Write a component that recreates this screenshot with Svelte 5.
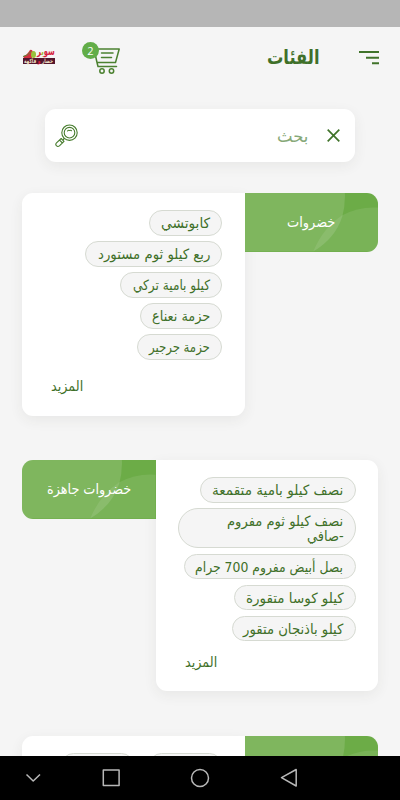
<script>
  const sections = [
    {
      title: 'خضروات', titleWidth: 48, side: 'right', height: 222.5, moreTop: 17, moreLeft: 29,
      items: [
        { w: 73.5, lines: [['كابوتشي', 49]] },
        { w: 137, lines: [['ربع كيلو ثوم مستورد', 112]] },
        { w: 102, lines: [['كيلو بامية تركي', 77]] },
        { w: 82, lines: [['حزمة نعناع', 58]] },
        { w: 85, lines: [['حزمة جرجير', 61]] }
      ]
    },
    {
      title: 'خضروات جاهزة', titleWidth: 84, side: 'left', height: 231, moreTop: 12, moreLeft: 29,
      items: [
        { w: 155.5, lines: [['نصف كيلو بامية متقمعة', 131]] },
        { w: 178, lines: [['نصف كيلو ثوم مفروم', 116], ['-صافي', 37]] },
        { w: 172, lines: [['بصل أبيض مفروم 700 جرام', 148]] },
        { w: 122, lines: [['كيلو كوسا متقورة', 98]] },
        { w: 124, lines: [['كيلو باذنجان متقور', 100]] }
      ]
    }
  ];

  function fit(node, width) {
    node.style.transform = `scaleX(${width / node.offsetWidth})`;
  }
</script>

{#snippet tag(title, width)}
  <div class="tag">
    <svg class="leaves" viewBox="0 0 133 58" preserveAspectRatio="none">
      <path d="M0 0H99.500Q100 12 97 23Q90 45 68 58H0Z" fill="#fff" opacity=".13" />
      <path d="M133 14.500Q114 13 97 22Q78 34 68 58H133Z" fill="#fff" opacity=".09" />
    </svg>
    {#if title}<span class="fit center" use:fit={width}>{title}</span>{/if}
  </div>
{/snippet}

<div class="screen" dir="rtl">
  <div class="status"></div>
  <header>
    <svg class="menu" width="20" height="14" viewBox="0 0 20 14" stroke="#40732a" stroke-width="2">
      <path d="M0 1H20M7 6.700H20M13 12.300H20" />
    </svg>
    <h1><span class="fit" use:fit={53}>الفئات</span></h1>
    <div class="cart">
      <svg width="40" height="34" viewBox="0 0 40 34" fill="none" stroke="#4b8130" stroke-width="1.500" stroke-linejoin="round" stroke-linecap="round">
        <path d="M12 7H37.200L33.500 20.500H15L12 7M15 20.500L16 24.500H34.500M19.500 11H31M19.500 15.500H29.500" />
        <circle cx="20" cy="29" r="2.200" /><circle cx="29.500" cy="29" r="2.200" />
      </svg>
      <b>2</b>
    </div>
    <div class="logo">
      <div class="logo-top">
        <span class="fit" use:fit={18}><i>سو</i><em>ب</em><i>ر</i></span>
        <svg width="13" height="9" viewBox="0 0 13 9">
          <path d="M0 7.500Q4 6 7 1Q9 0 10 3L9 9H1Z" fill="#d62f40" />
          <path d="M0 7.500Q5 7 8 2" fill="none" stroke="#5e8a35" />
          <ellipse cx="10.500" cy="5.500" rx="2.500" ry="3.500" fill="#9ac13c" />
        </svg>
      </div>
      <div class="logo-bottom"><span class="fit center" use:fit={29}>خضار <q>و</q> فاكهة</span></div>
    </div>
  </header>

  <div class="search">
    <svg class="close" width="13" height="13" viewBox="0 0 13 13" stroke="#40732a" stroke-width="1.700"><path d="M.7.7L12.300 12.300M12.300.7L.7 12.300" /></svg>
    <span class="hint"><span class="fit" use:fit={31}>بحث</span></span>
    <svg class="lens" width="24" height="24" viewBox="0 0 24 24" fill="none" stroke="#477c2d" stroke-width="1.100" stroke-linecap="round">
      <circle cx="14.500" cy="8.700" r="7.700" /><circle cx="14.500" cy="8.700" r="5.300" />
      <path d="M12.500 7Q13.500 5.800 14.500 6.500M15.500 6.300L16.500 6.800M9.300 14.500L8.300 15.500" />
      <path d="M6.200 14.500L1.500 18.800Q.1 20.200 1.400 21.700Q2.800 23.200 4.400 21.900L9 17.300ZM4.600 16.100L7.400 19" stroke-linejoin="round" />
    </svg>
  </div>

  <main>
    {#each sections as s}
      <section class:flip={s.side === 'left'}>
        {@render tag(s.title, s.titleWidth)}
        <div class="card" style:height="{s.height}px">
          <ul>
            {#each s.items as item}
              <li style:width="{item.w}px">
                {#each item.lines as [text, width]}
                  <div class="line"><span class="fit" use:fit={width}>{text}</span></div>
                {/each}
              </li>
            {/each}
          </ul>
          <div class="more" style:margin-top="{s.moreTop}px" style:margin-left="{s.moreLeft}px"><span class="fit left" use:fit={32}>المزيد</span></div>
        </div>
      </section>
    {/each}
    <section>
      {@render tag('', 0)}
      <div class="card">
        <ul class="row"><li></li><li></li></ul>
      </div>
    </section>
  </main>

  <nav dir="ltr">
    <svg width="400" height="44" viewBox="0 0 400 44" fill="none" stroke="#b8b8b8" stroke-width="1.500" stroke-linejoin="round">
      <path d="M26.500 18.500L33.200 25L40 18.500" />
      <rect x="103.300" y="14" width="15.800" height="15.500" />
      <circle cx="200" cy="22" r="8.500" />
      <path d="M281.500 21.700L296.200 13.500V30Z" />
    </svg>
  </nav>
</div>

<style>
  :global(body) { margin: 0; }
  .screen {
    width: 400px; height: 800px; overflow: hidden; background: #f5f5f5;
    display: flex; flex-direction: column; color: #3f7029;
    font-family: "DejaVu Sans", sans-serif; font-size: 14px; box-sizing: border-box;
  }
  .status { height: 27px; background: #b6b6b6; flex: none; }
  header { height: 82px; flex: none; display: flex; align-items: flex-start; padding: 0 21px 0 23px; }
  .menu { margin-top: 24px; }
  h1 { margin: 16px 39.500px 0 0; width: 53px; font-size: 20px; line-height: 28px; font-weight: bold; }
  .fit { display: inline-block; white-space: nowrap; transform-origin: right center; flex: none; }
  .fit.center { transform-origin: center; }
  .fit.left { transform-origin: left center; }
  .cart { position: relative; margin: 15px auto 0 0; width: 40px; height: 34px; order: 1; }
  .cart svg { display: block; }
  .cart b {
    position: absolute; left: 0; top: 0; width: 17px; height: 17px; border-radius: 50%;
    background: #62ad48; color: #fff; text-align: center; font: 11px/17px "Open Sans", sans-serif;
  }
  .cart { margin: 15px auto 0 27px; }
  .logo { order: 2; width: 32px; margin-top: 22px; flex: none; }
  .logo-top { height: 9px; display: flex; justify-content: space-between; font: bold 11px/6px "DejaVu Sans", sans-serif; }
  .logo-top .fit { margin-left: -20px; }
  .logo-top i { font-style: normal; color: #d51e3d; }
  .logo-top em { font-style: normal; color: #9abd35; }
  .logo-bottom { height: 6px; background: #54162c; color: #eadfc2; display: flex; justify-content: center; font-size: 6px; line-height: 5px; font-weight: bold; }
  .logo-bottom q { quotes: none; color: #e5203f; }
  .search {
    height: 53px; margin: 0 45px; flex: none; border-radius: 11px; background: #fff; display: flex;
    align-items: center; box-shadow: 0 4px 14px rgba(60, 60, 40, .07); padding: 0 15px 0 10px;
  }
  .hint { margin-right: 18.500px; width: 50px; font-size: 17px; color: #86a878; }
  .lens { margin-right: auto; }
  main { flex: 1; min-height: 0; overflow: hidden; padding: 31px 22px 0; display: flex; flex-direction: column; gap: 44.500px; }
  section { display: flex; align-items: flex-start; flex: none; }
  section.flip { flex-direction: row-reverse; }
  .tag {
    position: relative; width: 133.500px; height: 58.500px; background: #6cac47; border-radius: 0 11px 11px 0;
    overflow: hidden; display: flex; align-items: center; justify-content: center; color: #fff; flex: none;
  }
  .flip .tag { border-radius: 11px 0 0 11px; }
  .leaves { position: absolute; inset: 0; width: 100%; height: 100%; }
  .tag .fit { position: relative; }
  .card {
    flex: 1; box-sizing: border-box; min-height: 100px; padding: 17px 22.500px 0 0; background: #fff;
    border-radius: 11px 0 11px 11px; box-shadow: 0 4px 14px rgba(60, 60, 40, .07);
  }
  .flip .card { border-radius: 0 11px 11px 11px; }
  ul { list-style: none; margin: 0; padding: 0; display: flex; flex-direction: column; gap: 5.500px; }
  li {
    box-sizing: border-box; border: 1px solid #d6dad2; border-radius: 20px; background: #f5f5f5;
    padding: 5px 11px 4px; min-height: 25.500px; line-height: 15px;
  }
  .line { height: 14.500px; display: flex; }
  .more { display: flex; justify-content: flex-end; line-height: 18px; }
  .row { flex-direction: row; gap: 15px; }
  .row li { width: 73px; }
  nav { height: 44.500px; background: #000; flex: none; }
  nav svg { display: block; }
</style>
